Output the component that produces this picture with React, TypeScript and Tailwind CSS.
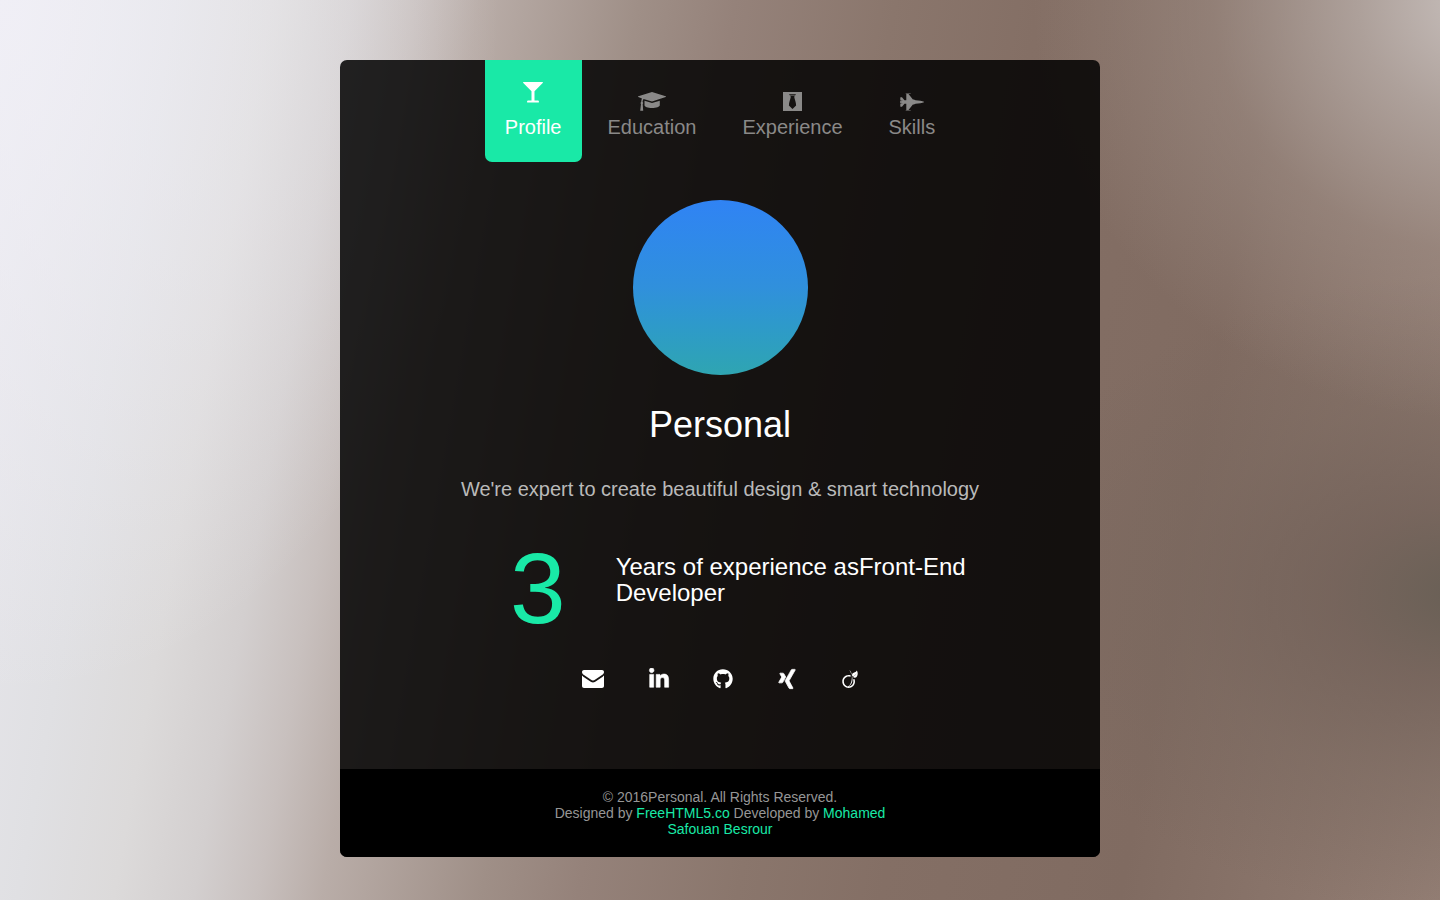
import type { ReactNode } from "react";
import { FaFighterJet, FaGithub, FaLinkedinIn, FaViadeo, FaXing } from "react-icons/fa";

function GlassIcon() {
  return (
    <svg viewBox="0 0 20 21" className="h-[21px] w-5" fill="currentColor" aria-hidden="true">
      <path d="M.5 0h19c.5 0 .6.7.2 1.1L11.500 9.200v9.300h3.300c1.200 0 1.400 1.500.9 2H4.300c-.5-.5-.3-2 .9-2h3.300V9.200L.3 1.100C-.1.7 0 0 .5 0Z" />
    </svg>
  );
}

function CapIcon() {
  return (
    <svg viewBox="0 0 28 19" className="h-[19px] w-7" fill="currentColor" aria-hidden="true">
      <path d="M14 0 27.700 4.300c.4.200.4.600 0 .8L14 9.600 5.500 6.900c-.5.7-.8 1.700-.9 3 .8.5.8 1.500.1 2.100l.5 6.800H2.200l.8-6.800c-.7-.6-.6-1.600.2-2.100.1-1.500.3-2.700.8-3.500L.3 5.100c-.4-.2-.4-.6 0-.8L14 0Z" />
      <path d="m6.500 8.700 7.500 2.400 7.800-2.400v4.500c0 1.500-3.500 2.800-7.800 2.800s-7.500-1.300-7.500-2.800V8.700Z" />
    </svg>
  );
}

function TieIcon() {
  return (
    <svg viewBox="0 0 19 19" className="size-[19px]" fill="currentColor" fillRule="evenodd" aria-hidden="true">
      <path d="M0 0h19v19H0V0Zm6 2.2 1.8 2.6c-.5 3-1.9 5.6-1.9 8.7l3.6 3.4 3.6-3.4c0-3.1-1.4-5.7-1.9-8.7L13 2.2H6Z" />
      <path d="M6.600 3.400h5.800v.7H6.600z" />
    </svg>
  );
}

function EnvelopeIcon() {
  return (
    <svg viewBox="0 0 22 18" className="h-[18px] w-[22px]" fill="currentColor" aria-hidden="true">
      <path d="M2 0h18c1.1 0 2 .8 2 2 0 1.300-.9 2.300-2 3l-6.700 4.400c-.8.6-1.500 1-2.300 1s-1.500-.4-2.300-1L2 5C.9 4.300 0 3.200 0 2 0 .8.9 0 2 0Z" />
      <path d="M0 5.600c.4.400.8.800 1.300 1.100l6.300 4.400c1 .7 2.100 1.500 3.400 1.500s2.400-.8 3.400-1.500l6.300-4.400c.5-.3.9-.7 1.300-1.100V16c0 1.100-.9 2-2 2H2c-1.100 0-2-.9-2-2V5.600Z" />
    </svg>
  );
}

type Tab = { id: string; label: string; icon: ReactNode };

const tabs: Tab[] = [
  { id: "profile", label: "Profile", icon: <GlassIcon /> },
  { id: "education", label: "Education", icon: <CapIcon /> },
  { id: "experience", label: "Experience", icon: <TieIcon /> },
  { id: "skills", label: "Skills", icon: <FaFighterJet className="h-5 w-6" /> },
];

const socials: { label: string; icon: ReactNode; box: string }[] = [
  { label: "Email", icon: <EnvelopeIcon />, box: "w-6" },
  { label: "LinkedIn", icon: <FaLinkedinIn className="size-[22px]" stroke="currentColor" strokeWidth={14} />, box: "w-[22px]" },
  { label: "GitHub", icon: <FaGithub className="size-5" />, box: "w-5" },
  { label: "Xing", icon: <FaXing className="size-[22px]" stroke="currentColor" strokeWidth={18} />, box: "w-[22px]" },
  { label: "Viadeo", icon: <FaViadeo className="size-[18px]" />, box: "w-[18px]" },
];

export default function App() {
  return (
    <div className="min-h-screen bg-[radial-gradient(500px_700px_at_0%_0%,#f2f1f8cc,#f2f1f800),radial-gradient(450px_420px_at_103%_0%,#c8c0bd,#b7aca7cc_28%,#a3938b80_60%,#8f7b7000),radial-gradient(480px_320px_at_102%_66%,#685f55,#6e5e56b3_28%,#75655c73_60%,#7b6a6000),linear-gradient(100deg,#e9e8ee_0%,#e0e0e3_11%,#dcdada_17%,#d3cfcf_22%,#c8c0be_26%,#b9ada8_30%,#9f8f87_40%,#95827a_46%,#8a766c_56%,#846f65_65%,#806b61_80%,#8a756b_91%,#937e74_100%)] px-4 pt-15 pb-10 font-['Liberation_Sans',Arial,sans-serif]">
      <main className="mx-auto max-w-[760px] overflow-hidden rounded-[7px] bg-black/85">
        <nav aria-label="Sections" className="flex flex-wrap justify-center gap-[6px]">
          {tabs.map((tab, i) => (
            <a
              key={tab.id}
              href={`#${tab.id}`}
              aria-current={i === 0 ? "page" : undefined}
              className={
                i === 0
                  ? "flex h-[102px] flex-col items-center rounded-b-[7px] bg-[#19e9a7] px-5 pt-[22px] text-xl leading-6 text-white"
                  : "flex h-[102px] flex-col items-center px-5 pt-8 text-xl leading-6 text-[#8a8988]"
              }
            >
              <span className={i === 0 ? "flex h-[33px] items-start" : "flex h-[23px] items-start"}>{tab.icon}</span>
              {tab.label}
            </a>
          ))}
        </nav>

        <section id="profile" className="flex flex-col items-center px-4 pt-[38px] pb-[79px] text-center">
          <div className="size-[175px] rounded-full bg-linear-to-b from-[#3083f4] via-[#3090dc] to-[#2fa5b1]" />
          <h1 className="mt-[30px] text-4xl leading-10 text-white">Personal</h1>
          <p className="mt-[30px] text-xl leading-7 text-[#bababa]">
            We're expert to create beautiful design &amp; smart technology
          </p>
          <div className="mt-[35px] flex w-full max-w-[500px] items-start gap-[50px] pl-10 text-left">
            <span className="text-[100px] leading-[100px] text-[#19e9a7]">3</span>
            <h2 className="pt-4 text-2xl leading-[26px] text-white">Years of experience asFront-End Developer</h2>
          </div>
          <ul className="mt-[30px] flex items-center justify-center gap-[43px] text-white">
            {socials.map((s) => (
              <li key={s.label} className={s.box}>
                <a href={`#${s.label.toLowerCase()}`} aria-label={s.label} className="flex h-[22px] items-center justify-center">
                  {s.icon}
                </a>
              </li>
            ))}
          </ul>
        </section>

        <footer className="bg-black px-4 py-5 text-center text-sm leading-4 text-[#969696]">
          <p className="mx-auto max-w-[350px]">
            © 2016Personal. All Rights Reserved.
            <br />
            Designed by{" "}
            <a href="#freehtml5" className="text-[#19e9a7]">
              FreeHTML5.co
            </a>{" "}
            Developed by{" "}
            <a href="#developer" className="text-[#19e9a7]">
              Mohamed Safouan Besrour
            </a>
          </p>
        </footer>
      </main>
    </div>
  );
}
